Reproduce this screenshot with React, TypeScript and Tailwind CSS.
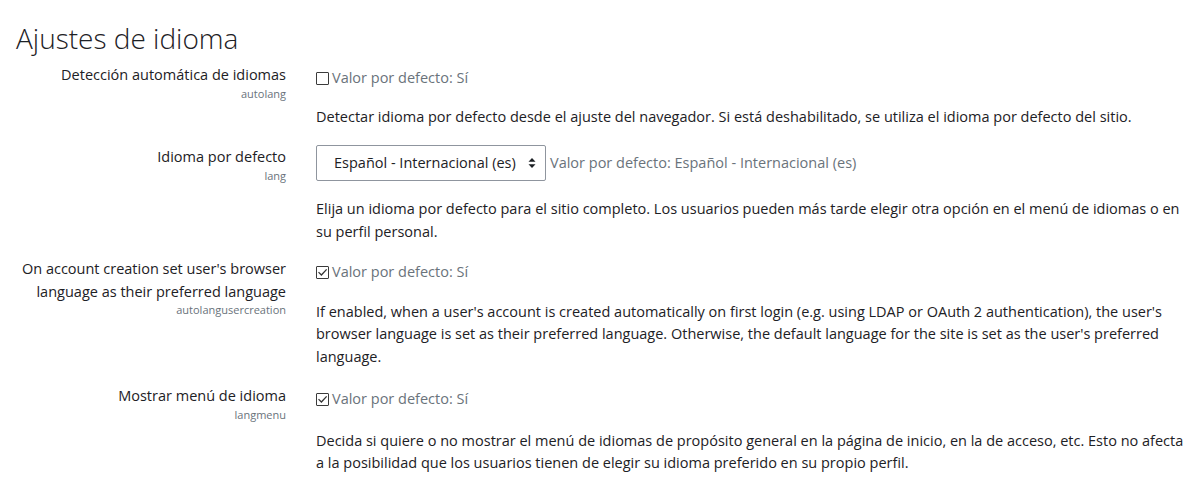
import React from "react";

const FONT = { fontFamily: '"Open Sans", "Noto Sans", sans-serif' };

function Checkbox({ checked }: { checked: boolean }) {
  return (
    <span className="inline-flex items-center justify-center w-[13px] h-[13px] border border-[#3b3b3b] bg-white rounded-[1px] mr-[3px] shrink-0">
      {checked && (
        <svg width="11" height="11" viewBox="0 0 11 11" fill="none">
          <path d="M2 5.6 L4.4 8 L9.2 2.8" stroke="#333" strokeWidth="1.3" strokeLinecap="square" />
        </svg>
      )}
    </span>
  );
}

function Label({ lines, name }: { lines: string[]; name: string }) {
  return (
    <div className="w-[271px] shrink-0 text-right">
      {lines.map((l) => (
        <div key={l} className="text-[14.5px] leading-[22.5px] text-[#1d2125]">{l}</div>
      ))}
      <div className="text-[11px] leading-[14px] text-[#6a737b]">{name}</div>
    </div>
  );
}

function CheckRow({ checked }: { checked: boolean }) {
  return (
    <div className="flex items-center pt-[3px] h-[25.5px]">
      <Checkbox checked={checked} />
      <span className="text-[14.5px] leading-[22.5px] text-[#6a737b]">Valor por defecto: Sí</span>
    </div>
  );
}

function Desc({ children, mt }: { children: React.ReactNode; mt: string }) {
  return <p className={`${mt} text-[14.5px] leading-[22.5px] text-[#1d2125]`}>{children}</p>;
}

export default function App() {
  return (
    <div className="bg-white w-[1196px] h-[483px] overflow-hidden pl-[15px] pr-[6px] pt-[21px]" style={FONT}>
      <h2 className="text-[28px] font-light leading-[34px] text-[#1d2125] mb-[9px] ml-[1px]">Ajustes de idioma</h2>

      <div className="flex mb-[18px]">
        <Label lines={["Detección automática de idiomas"]} name="autolang" />
        <div className="ml-[30px] flex-1">
          <CheckRow checked={false} />
          <Desc mt="mt-[16px]">
            Detectar idioma por defecto desde el ajuste del navegador. Si está deshabilitado, se utiliza el idioma por defecto del sitio.
          </Desc>
        </div>
      </div>

      <div className="flex mb-[15px]">
        <Label lines={["Idioma por defecto"]} name="lang" />
        <div className="ml-[30px] flex-1">
          <div className="flex items-center -mt-[1px]">
            <div className="flex items-center justify-between w-[230px] h-[36px] border border-[#8f959e] rounded-[2px] pl-[17px] pr-[9px] text-[14.5px] text-[#1d2125]">
              <span>Español - Internacional (es)</span>
              <svg width="8" height="12" viewBox="0 0 8 12">
                <path d="M4 1 L7.5 4.8 H0.5 Z" fill="#1d2125" />
                <path d="M4 11 L7.5 7.2 H0.5 Z" fill="#1d2125" />
              </svg>
            </div>
            <span className="ml-[4px] text-[14.5px] leading-[22.5px] text-[#6a737b]">Valor por defecto: Español - Internacional (es)</span>
          </div>
          <Desc mt="mt-[17px]">
            Elija un idioma por defecto para el sitio completo. Los usuarios pueden más tarde elegir otra opción en el menú de idiomas o en su perfil personal.
          </Desc>
        </div>
      </div>

      <div className="flex mb-[17px]">
        <Label lines={["On account creation set user's browser", "language as their preferred language"]} name="autolangusercreation" />
        <div className="ml-[30px] flex-1">
          <CheckRow checked={true} />
          <Desc mt="mt-[17px]">
            If enabled, when a user's account is created automatically on first login (e.g. using LDAP or OAuth 2 authentication), the user's browser language is set as their preferred language. Otherwise, the default language for the site is set as the user's preferred language.
          </Desc>
        </div>
      </div>

      <div className="flex mb-[16px]">
        <Label lines={["Mostrar menú de idioma"]} name="langmenu" />
        <div className="ml-[30px] flex-1">
          <CheckRow checked={true} />
          <Desc mt="mt-[19px]">
            Decida si quiere o no mostrar el menú de idiomas de propósito general en la página de inicio, en la de acceso, etc. Esto no afecta a la posibilidad que los usuarios tienen de elegir su idioma preferido en su propio perfil.
          </Desc>
        </div>
      </div>
    </div>
  );
}
